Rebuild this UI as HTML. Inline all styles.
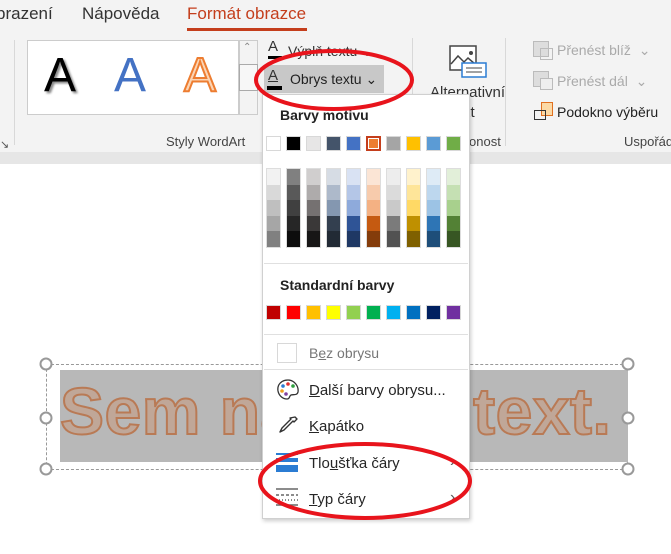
<!DOCTYPE html>
<html><head><meta charset="utf-8"><style>
*{margin:0;padding:0;box-sizing:border-box}
body{width:671px;height:554px;overflow:hidden;background:#fff;font-family:"Liberation Sans",sans-serif;position:relative;color:#262626}
.a{position:absolute;white-space:nowrap}
.sw{position:absolute;width:15px;height:15px;border:1px solid #d8d8d8}
.col{position:absolute;width:15px;top:168px;border:1px solid #ddd}
.col div{height:15.6px}
.mi{position:absolute;left:309px;font-size:15px;color:#262626}
</style></head><body>
<div class="a" style="left:0;top:0;width:671px;height:152px;background:#f3f3f3"></div>
<div class="a" style="left:0;top:152px;width:671px;height:12px;background:#e6e6e6"></div>
<div class="a" style="left:-4px;top:4px;font-size:17px;color:#333">brazení</div>
<div class="a" style="left:82px;top:4px;font-size:17px;color:#333">Nápověda</div>
<div class="a" style="left:187px;top:4px;font-size:17px;color:#c43e1c">Formát obrazce</div>
<div class="a" style="left:187px;top:28px;width:120px;height:3px;background:#c43e1c"></div>
<div class="a" style="left:14px;top:40px;width:1px;height:105px;background:#d8d8d8"></div>
<div class="a" style="left:412px;top:38px;width:1px;height:108px;background:#d8d8d8"></div>
<div class="a" style="left:505px;top:38px;width:1px;height:108px;background:#d8d8d8"></div>
<div class="a" style="left:0;top:138px;font-size:11px;color:#555">↘</div>
<div class="a" style="left:27px;top:40px;width:212px;height:75px;background:#fff;border:1px solid #ccc"></div>
<div class="a" style="left:239px;top:40px;width:19px;height:75px;border:1px solid #ccc;background:#f3f3f3"></div>
<div class="a" style="left:239px;top:64px;width:19px;height:27px;border:1px solid #aaa;background:#f7f7f7"></div>
<div class="a" style="left:243px;top:42px;font-size:10px;color:#888">⌃</div>
<div class="a" style="left:44px;top:48px;font-size:48px;color:#000;text-shadow:2px 2px 2px #888">A</div>
<div class="a" style="left:114px;top:48px;font-size:48px;color:#4472c4">A</div>
<div class="a" style="left:184px;top:48px;font-size:48px;color:#fbd5b5;-webkit-text-stroke:2px #ed7d31">A</div>
<div class="a" style="left:166px;top:134px;font-size:13px;color:#444">Styly WordArt</div>
<div class="a" style="left:268px;top:38px;font-size:15px;color:#333">A</div>
<div class="a" style="left:268px;top:56px;width:14px;height:3px;background:#000"></div>
<div class="a" style="left:288px;top:43px;font-size:14px;color:#333">Výplň textu ⌄</div>
<div class="a" style="left:264px;top:65px;width:120px;height:28px;background:#c8c8c8"></div>
<div class="a" style="left:268px;top:67px;font-size:15px;color:#333;text-decoration:underline">A</div>
<div class="a" style="left:267px;top:86px;width:15px;height:4px;background:#000"></div>
<div class="a" style="left:290px;top:71px;font-size:14px;color:#222">Obrys textu ⌄</div>
<svg class="a" style="left:448px;top:44px" width="40" height="36"><rect x="2" y="2" width="26" height="24" fill="#fff" stroke="#444" stroke-width="1.5"/><path d="M3 20 L10 12 L16 18 L20 14 L27 20" fill="none" stroke="#444" stroke-width="1.5"/><circle cx="23" cy="9" r="2" fill="#444"/><rect x="14" y="19" width="24" height="14" fill="#fff" stroke="#2b7cd3" stroke-width="1.5"/><path d="M18 24h16M18 28h16" stroke="#444"/></svg>
<div class="a" style="left:430px;top:84px;font-size:15px;color:#333">Alternativní</div>
<div class="a" style="left:463px;top:104px;font-size:15px;color:#333">xt</div>
<div class="a" style="left:469px;top:134px;font-size:13px;color:#444">onost</div>
<div class="a" style="left:533px;top:41px;width:16px;height:16px;border:1px solid #bbb;background:#ddd"></div>
<div class="a" style="left:540px;top:48px;width:13px;height:12px;border:1px solid #bbb"></div>
<div class="a" style="left:557px;top:42px;font-size:14px;color:#aaa">Přenést blíž &nbsp;⌄</div>
<div class="a" style="left:533px;top:71px;width:16px;height:16px;border:1px solid #bbb;background:#ddd"></div>
<div class="a" style="left:540px;top:78px;width:13px;height:12px;border:1px solid #bbb;background:#eee"></div>
<div class="a" style="left:557px;top:73px;font-size:14px;color:#aaa">Přenést dál &nbsp;⌄</div>
<div class="a" style="left:541px;top:102px;width:12px;height:14px;border:1px solid #e07020;background:#fcd9a5"></div>
<div class="a" style="left:534px;top:110px;width:12px;height:10px;border:1px solid #333"></div>
<div class="a" style="left:557px;top:104px;font-size:14px;color:#222">Podokno výběru</div>
<div class="a" style="left:624px;top:134px;font-size:13px;color:#444">Uspořád</div>

<!-- text box -->
<div class="a" style="left:46px;top:364px;width:582px;height:106px;border:1px dashed #999"></div>
<div class="a" style="left:60px;top:370px;width:568px;height:92px;background:#b8b8b8"></div>
<div class="a" style="left:60px;top:373px;font-size:66px;font-weight:bold;color:rgba(200,150,120,.5);-webkit-text-stroke:2px #b97a55;letter-spacing:0.5px">Sem napište text.</div>
<svg class="a" style="left:0;top:0" width="671" height="554">
<g fill="#fff" stroke="#999" stroke-width="2"><circle cx="46" cy="364" r="5.5"/><circle cx="628" cy="364" r="5.5"/><circle cx="46" cy="418" r="5.5"/><circle cx="628" cy="418" r="5.5"/><circle cx="46" cy="469" r="5.5"/><circle cx="628" cy="469" r="5.5"/></g></svg>

<!-- menu -->
<div class="a" style="left:262px;top:94px;width:208px;height:425px;background:#fff;border:1px solid #d0d0d0;box-shadow:1px 2px 4px rgba(0,0,0,.2)"></div>
<div class="a" style="left:280px;top:107px;font-size:14px;font-weight:bold;color:#222">Barvy motivu</div>
<div class="sw" style="left:266px;top:136px;background:#fff"></div>
<div class="sw" style="left:286px;top:136px;background:#000"></div>
<div class="sw" style="left:306px;top:136px;background:#e7e6e6"></div>
<div class="sw" style="left:326px;top:136px;background:#44546a"></div>
<div class="sw" style="left:346px;top:136px;background:#4472c4"></div>
<div class="sw" style="left:366px;top:136px;background:#ed7d31;border:2px solid #c43e1c;outline:1px solid #fff;outline-offset:-3px"></div>
<div class="sw" style="left:386px;top:136px;background:#a5a5a5"></div>
<div class="sw" style="left:406px;top:136px;background:#ffc000"></div>
<div class="sw" style="left:426px;top:136px;background:#5b9bd5"></div>
<div class="sw" style="left:446px;top:136px;background:#70ad47"></div>
<div class="col" style="left:266px"><div style="background:#f2f2f2"></div><div style="background:#d9d9d9"></div><div style="background:#bfbfbf"></div><div style="background:#a6a6a6"></div><div style="background:#808080"></div></div>
<div class="col" style="left:286px"><div style="background:#808080"></div><div style="background:#595959"></div><div style="background:#404040"></div><div style="background:#262626"></div><div style="background:#0d0d0d"></div></div>
<div class="col" style="left:306px"><div style="background:#d0cece"></div><div style="background:#aeabab"></div><div style="background:#757171"></div><div style="background:#3a3838"></div><div style="background:#171616"></div></div>
<div class="col" style="left:326px"><div style="background:#d6dce4"></div><div style="background:#adb9ca"></div><div style="background:#8497b0"></div><div style="background:#333f4f"></div><div style="background:#222a35"></div></div>
<div class="col" style="left:346px"><div style="background:#d9e2f3"></div><div style="background:#b4c6e7"></div><div style="background:#8eaadb"></div><div style="background:#2f5496"></div><div style="background:#1f3864"></div></div>
<div class="col" style="left:366px"><div style="background:#fbe5d5"></div><div style="background:#f7cbac"></div><div style="background:#f4b183"></div><div style="background:#c55a11"></div><div style="background:#843c0b"></div></div>
<div class="col" style="left:386px"><div style="background:#ededed"></div><div style="background:#dbdbdb"></div><div style="background:#c9c9c9"></div><div style="background:#7b7b7b"></div><div style="background:#525252"></div></div>
<div class="col" style="left:406px"><div style="background:#fff2cc"></div><div style="background:#fee599"></div><div style="background:#ffd965"></div><div style="background:#bf9000"></div><div style="background:#7f6000"></div></div>
<div class="col" style="left:426px"><div style="background:#deebf6"></div><div style="background:#bdd7ee"></div><div style="background:#9cc3e5"></div><div style="background:#2e75b5"></div><div style="background:#1e4e79"></div></div>
<div class="col" style="left:446px"><div style="background:#e2efd9"></div><div style="background:#c5e0b3"></div><div style="background:#a8d08d"></div><div style="background:#538135"></div><div style="background:#375623"></div></div>
<div class="a" style="left:264px;top:263px;width:204px;height:1px;background:#e0e0e0"></div>
<div class="a" style="left:280px;top:277px;font-size:14px;font-weight:bold;color:#222">Standardní barvy</div>
<div class="sw" style="left:266px;top:305px;background:#c00000"></div>
<div class="sw" style="left:286px;top:305px;background:#ff0000"></div>
<div class="sw" style="left:306px;top:305px;background:#ffc000"></div>
<div class="sw" style="left:326px;top:305px;background:#ffff00"></div>
<div class="sw" style="left:346px;top:305px;background:#92d050"></div>
<div class="sw" style="left:366px;top:305px;background:#00b050"></div>
<div class="sw" style="left:386px;top:305px;background:#00b0f0"></div>
<div class="sw" style="left:406px;top:305px;background:#0070c0"></div>
<div class="sw" style="left:426px;top:305px;background:#002060"></div>
<div class="sw" style="left:446px;top:305px;background:#7030a0"></div>
<div class="a" style="left:264px;top:334px;width:204px;height:1px;background:#e0e0e0"></div>
<div class="a" style="left:277px;top:343px;width:20px;height:20px;border:1px solid #d8d8d8"></div>
<div class="mi" style="top:345px;font-size:14px;color:#777">B<u>e</u>z obrysu</div>
<div class="a" style="left:264px;top:369px;width:204px;height:1px;background:#e0e0e0"></div>
<svg class="a" style="left:276px;top:378px" width="24" height="24"><path d="M12 2C5 2 1 7 2 13c1 5 5 8 9 8 3 0 2-3 4-4 2-1 6 1 7-3 1-6-4-12-10-12z" fill="#fff" stroke="#333" stroke-width="1.3"/><circle cx="7" cy="8" r="1.8" fill="#2b7cd3"/><circle cx="12" cy="6" r="1.8" fill="#e03030"/><circle cx="17" cy="8" r="1.8" fill="#30a040"/><circle cx="6" cy="13" r="1.8" fill="#f0a020"/><circle cx="10" cy="16" r="1.8" fill="#8040a0"/></svg>
<div class="mi" style="top:382px"><u>D</u>alší barvy obrysu...</div>
<svg class="a" style="left:276px;top:414px" width="24" height="24"><path d="M19 3l2 2-3 3-1-1-9 9-4 2 2-4 9-9-1-1z" fill="#fff" stroke="#333" stroke-width="1.4" stroke-linejoin="round"/></svg>
<div class="mi" style="top:418px"><u>K</u>apátko</div>
<svg class="a" style="left:276px;top:453px" width="22" height="20"><rect x="0" y="0" width="22" height="2" fill="#2b7cd3"/><rect x="0" y="5" width="22" height="4" fill="#2b7cd3"/><rect x="0" y="12" width="22" height="7" fill="#2b7cd3"/></svg>
<div class="mi" style="top:455px">Tlo<u>u</u>šťka čáry</div>
<div class="a" style="left:450px;top:453px;font-size:16px;color:#555">›</div>
<svg class="a" style="left:276px;top:488px" width="22" height="20"><path d="M0 1h22M0 7h3M5 7h3M10 7h3M15 7h3M20 7h2M0 12h1M3 12h1M6 12h1M9 12h1M12 12h1M15 12h1M18 12h1M21 12h1M0 17h8M11 17h11" stroke="#666" stroke-width="1.5"/></svg>
<div class="mi" style="top:491px"><u>T</u>yp čáry</div>
<div class="a" style="left:450px;top:489px;font-size:16px;color:#555">›</div>

<svg class="a" style="left:0;top:0" width="671" height="554"><g fill="none" stroke="#e8141c" stroke-width="4"><ellipse cx="334" cy="80" rx="78" ry="29"/><ellipse cx="365" cy="481" rx="105" ry="37"/></g></svg>
</body></html>
